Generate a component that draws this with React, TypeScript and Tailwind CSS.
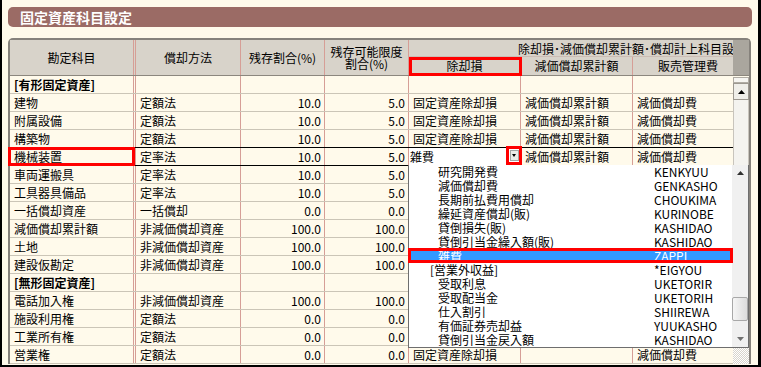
import clsx from 'clsx';

interface AssetRow {
  name: string;
  group?: boolean;
  method?: string;
  rate?: string;
  limit?: string;
  loss?: string;
  accum?: string;
  expense?: string;
}

interface ListItem {
  name: string;
  code: string;
  group?: boolean;
}

const FULL = { loss: '固定資産除却損', accum: '減価償却累計額', expense: '減価償却費' };

const ROWS: AssetRow[] = [
  { name: '[有形固定資産]', group: true },
  { name: '建物', method: '定額法', rate: '10.0', limit: '5.0', ...FULL },
  { name: '附属設備', method: '定額法', rate: '10.0', limit: '5.0', ...FULL },
  { name: '構築物', method: '定額法', rate: '10.0', limit: '5.0', ...FULL },
  { name: '機械装置', method: '定率法', rate: '10.0', limit: '5.0', ...FULL, loss: '雑費' },
  { name: '車両運搬具', method: '定率法', rate: '10.0', limit: '5.0', ...FULL },
  { name: '工具器具備品', method: '定率法', rate: '10.0', limit: '5.0', ...FULL },
  { name: '一括償却資産', method: '一括償却', rate: '0.0', limit: '0.0', ...FULL },
  { name: '減価償却累計額', method: '非減価償却資産', rate: '100.0', limit: '100.0' },
  { name: '土地', method: '非減価償却資産', rate: '100.0', limit: '100.0' },
  { name: '建設仮勘定', method: '非減価償却資産', rate: '100.0', limit: '100.0' },
  { name: '[無形固定資産]', group: true },
  { name: '電話加入権', method: '非減価償却資産', rate: '100.0', limit: '100.0' },
  { name: '施設利用権', method: '定額法', rate: '0.0', limit: '0.0', ...FULL },
  { name: '工業所有権', method: '定額法', rate: '0.0', limit: '0.0', ...FULL },
  { name: '営業権', method: '定額法', rate: '0.0', limit: '0.0', loss: '固定資産除却損', expense: '減価償却費' },
];

const CURRENT = 4;

const ITEMS: ListItem[] = [
  { name: '研究開発費', code: 'KENKYUU' },
  { name: '減価償却費', code: 'GENKASHO' },
  { name: '長期前払費用償却', code: 'CHOUKIMA' },
  { name: '繰延資産償却(販)', code: 'KURINOBE' },
  { name: '貸倒損失(販)', code: 'KASHIDAO' },
  { name: '貸倒引当金繰入額(販)', code: 'KASHIDAO' },
  { name: '雑費', code: 'ZAPPI' },
  { name: '[営業外収益]', code: '*EIGYOU', group: true },
  { name: '受取利息', code: 'UKETORIR' },
  { name: '受取配当金', code: 'UKETORIH' },
  { name: '仕入割引', code: 'SHIIREWA' },
  { name: '有価証券売却益', code: 'YUUKASHO' },
  { name: '貸倒引当金戻入額', code: 'KASHIDAO' },
];

const SELECTED = 6;

function Arrow({ down, color = '#404040' }: { down?: boolean; color?: string }) {
  return (
    <svg width="7" height="4" viewBox="0 0 7 4">
      <path d={down ? 'M0 0L3.5 4L7 0Z' : 'M0 4L3.5 0L7 4Z'} fill={color} />
    </svg>
  );
}

function GridRow({ row, idx }: { row: AssetRow; idx: number }) {
  const current = idx === CURRENT;
  const dark = current || idx === CURRENT - 1;

  return (
    <div
      className={clsx(
        'flex h-[18px] border-b leading-[17px] whitespace-nowrap',
        dark ? 'border-black' : 'border-[#cbc5b7]',
      )}
    >
      <div className="relative w-[126px] shrink-0 border-r-[3px] border-double border-[#d69e96] pl-[4px]">
        <span className={row.group ? 'font-bold' : ''}>{row.name}</span>
        {current && (
          <div className="absolute -top-[1px] -right-[2px] -bottom-[1px] -left-[2px] border-[3px] border-[#ff0000]" />
        )}
      </div>
      <div className="w-[105px] shrink-0 border-r border-[#d69e96] pl-[4px]">{row.method}</div>
      <div className="w-[84px] shrink-0 border-r border-[#d69e96] pr-[3px] text-right">{row.rate}</div>
      <div className="w-[84px] shrink-0 border-r border-[#d69e96] pr-[3px] text-right">{row.limit}</div>
      {current ? (
        <div className="relative w-[112px] shrink-0 border-r border-[#d69e96] bg-white pl-[1px]">
          {row.loss}
          <div className="absolute -top-[2px] left-[97px] flex h-[19px] w-[16px] items-center justify-center border-[3px] border-[#ff0000]">
            <div className="flex h-[11px] w-[9px] items-center justify-center border border-[#a4a4a4] bg-[#ecebe8]">
              <svg width="4" height="3" viewBox="0 0 4 3">
                <path d="M0 0L2 3L4 0Z" fill="#000" />
              </svg>
            </div>
          </div>
        </div>
      ) : (
        <div className="w-[112px] shrink-0 border-r border-[#d69e96] pl-[4px]">{row.loss}</div>
      )}
      <div className="w-[112px] shrink-0 border-r border-[#d69e96] pl-[4px]">{row.accum}</div>
      <div className="w-[100px] shrink-0 overflow-hidden pl-[4px]">{row.expense}</div>
    </div>
  );
}

function AccountDropdown() {
  return (
    <div className="absolute top-[125px] left-[398px] flex h-[183px] w-[341px] border-x border-b border-[#6e6e6e] bg-white">
      <div className="w-[323px] shrink-0">
        {ITEMS.map((item, i) => {
          const sel = i === SELECTED;
          return (
            <div
              key={item.name}
              className={clsx(
                'relative flex h-[14px] leading-[14px] whitespace-nowrap',
                sel && 'bg-[#3399ff] text-white',
              )}
            >
              <span className={clsx('w-[245px] shrink-0', item.group ? 'pl-[21px]' : 'pl-[29px]')}>
                {item.name}
              </span>
              <span>{item.code}</span>
              {sel && (
                <div className="absolute -top-[1px] -right-[1px] bottom-[0px] -left-[1px] border-[3px] border-[#ff0000]" />
              )}
            </div>
          );
        })}
      </div>
      <div className="flex w-[16px] flex-col bg-[#f0f0f0]">
        <div className="flex h-[16px] items-center justify-center">
          <Arrow color="#303030" />
        </div>
        <div className="flex-1 pt-[116px]">
          <div className="h-[24px] rounded-[2px] border border-[#a8a8a8] bg-gradient-to-r from-[#f6f6f6] to-[#dcdcdc]" />
        </div>
        <div className="flex h-[16px] items-center justify-center">
          <Arrow down color="#707070" />
        </div>
      </div>
    </div>
  );
}

export default function App() {
  return (
    <div className="h-[367px] w-[761px] overflow-hidden border-r-[3px] border-b-2 border-l-2 border-black bg-[#fffaeb] font-['Noto_Sans_CJK_JP',sans-serif] text-[12px] text-black">
      <div className="mx-[6px] mt-[7px] h-[20px] rounded-[5px] bg-[#9b6b65] pl-[12px] text-[14px] leading-[20px] font-bold text-white">
        固定資産科目設定
      </div>

      <div className="relative mt-[11px] ml-[6px] w-[743px] rounded-t-[5px] border-x-2 border-t-2 border-[#86827c]">
        {/* header */}
        <div className="flex h-[36px] border-b border-[#8c877e] bg-[#d8d3ca] whitespace-nowrap">
          <div className="flex w-[126px] shrink-0 items-center justify-center border-r-[3px] border-double border-[#d69e96]">
            勘定科目
          </div>
          <div className="flex w-[105px] shrink-0 items-center justify-center border-r border-[#d69e96]">
            償却方法
          </div>
          <div className="flex w-[84px] shrink-0 items-center justify-center border-r border-[#d69e96]">
            残存割合(%)
          </div>
          <div className="flex w-[84px] shrink-0 flex-col items-center justify-center border-r border-[#d69e96] leading-[12px]">
            <span>残存可能限度</span>
            <span>割合(%)</span>
          </div>
          <div className="flex w-[324px] shrink-0 flex-col">
            <div className="h-[17px] overflow-hidden border-b border-[#cbbdb5] pl-[109px] leading-[17px]">
              除却損･減価償却累計額･償却計上科目設定
            </div>
            <div className="flex flex-1">
              <div className="relative flex w-[112px] shrink-0 items-center justify-center border-r border-[#d69e96]">
                除却損
                <div className="absolute top-0 -right-[2px] -bottom-[1px] left-0 border-[3px] border-[#ff0000]" />
              </div>
              <div className="flex w-[112px] shrink-0 items-center justify-center border-r border-[#d69e96]">
                減価償却累計額
              </div>
              <div className="flex w-[100px] shrink-0 items-center overflow-hidden pl-[25px]">販売管理費</div>
            </div>
          </div>
          <div className="w-[16px] shrink-0 bg-[#aaa69e]" />
        </div>

        {/* body */}
        <div className="flex">
          <div className="w-[723px] shrink-0">
            {ROWS.map((row, i) => (
              <GridRow key={row.name} row={row} idx={i} />
            ))}
          </div>
          <div className="flex w-[16px] shrink-0 flex-col">
            <div className="mt-[1px] h-[6px] border border-[#b0aca4] bg-[#f6f5f1]" />
            <div className="flex h-[17px] items-center justify-center border border-[#9c9890] bg-[#efeee9]">
              <Arrow color="#000" />
            </div>
            <div className="h-[230px] border-x border-[#c8c4bc] bg-[#f4f3ef]" />
            <div className="flex-1 bg-[repeating-conic-gradient(#ffffff_0_25%,#d8d4cc_0_50%)] bg-[length:2px_2px]" />
          </div>
        </div>

        <AccountDropdown />
      </div>
    </div>
  );
}
